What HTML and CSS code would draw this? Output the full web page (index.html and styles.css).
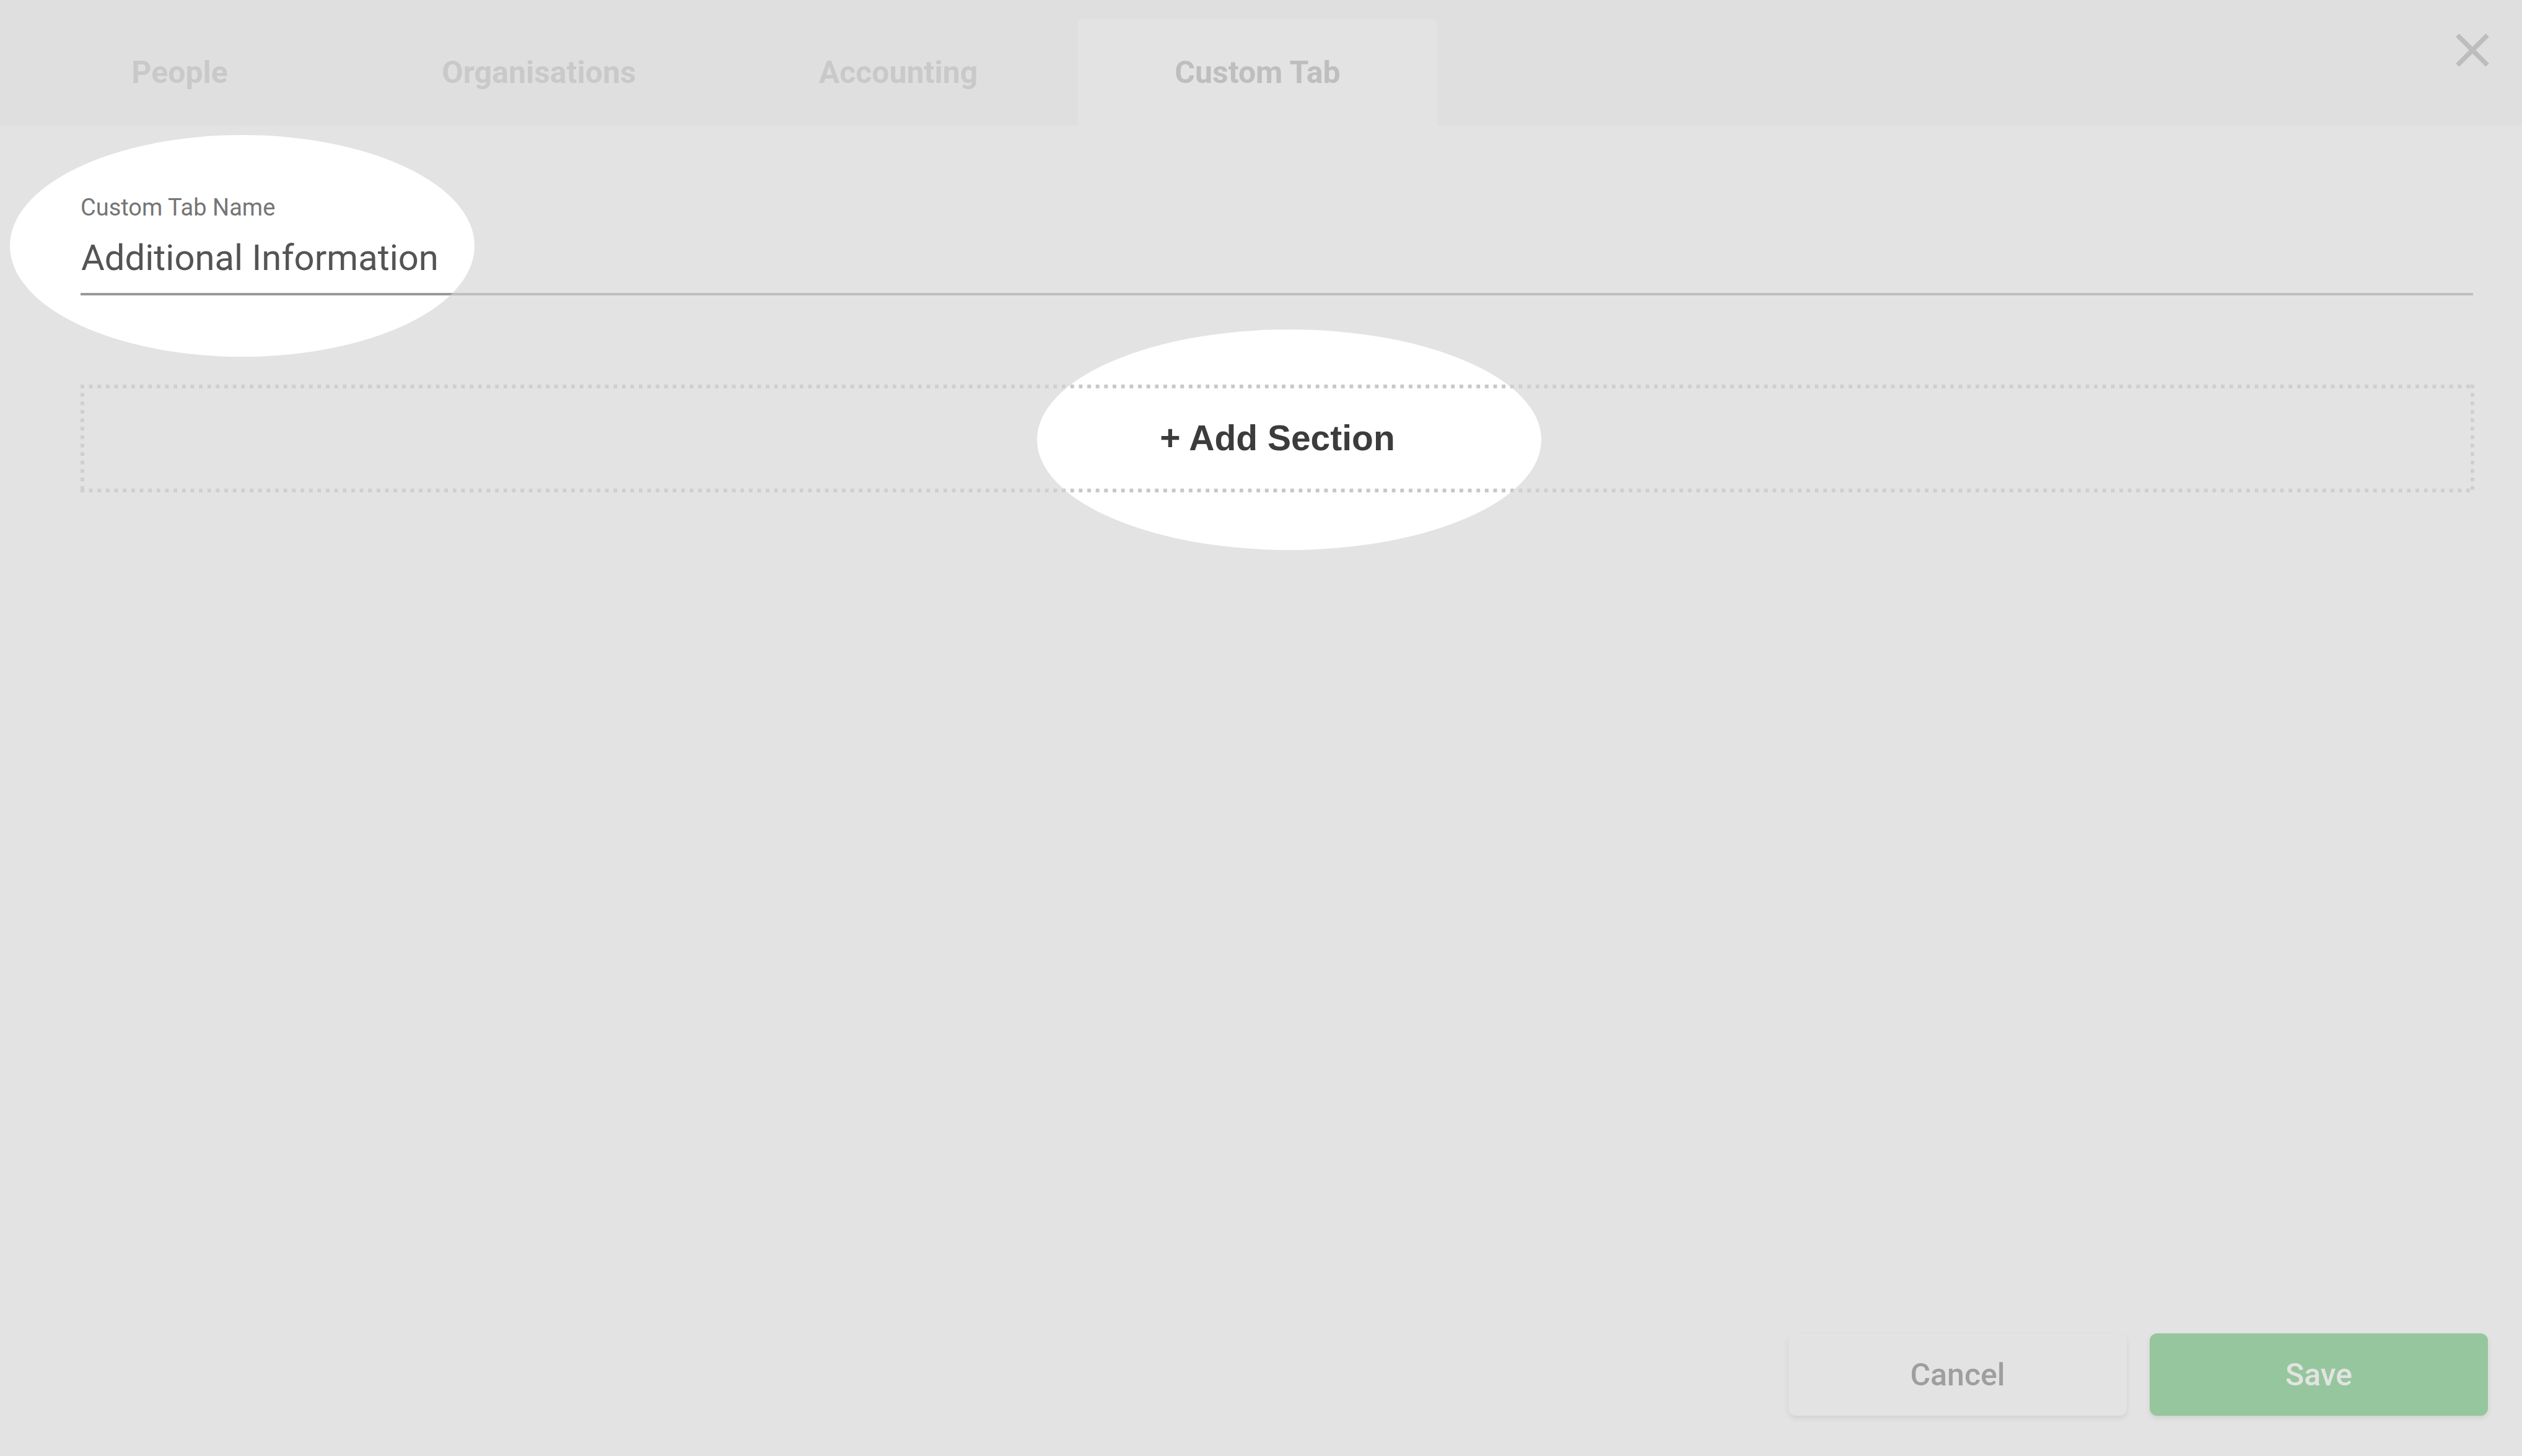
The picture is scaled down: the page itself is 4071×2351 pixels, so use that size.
FILE: index.html
```
<!DOCTYPE html>
<html lang="en">
<head>
    <meta charset="UTF-8">
    <meta name="viewport" content="width=device-width, initial-scale=1.0">
    <title>Custom Tab</title>
    <link rel="stylesheet" href="styles.css">
</head>
<body>
    <div class="dialog">
        <!-- Tab bar -->
        <nav class="tabs">
            <div class="tab">People</div>
            <div class="tab">Organisations</div>
            <div class="tab">Accounting</div>
            <div class="tab active">Custom Tab</div>
        </nav>

        <a href="#" class="close-btn" aria-label="Close">
            <svg viewBox="0 0 24 24" width="92" height="92">
                <path d="M19 6.41L17.59 5 12 10.59 6.41 5 5 6.41 10.59 12 5 17.59 6.41 19 12 13.41 17.59 19 19 17.59 13.41 12z"/>
            </svg>
        </a>

        <!-- Tab content -->
        <main class="content">
            <div class="field">
                <label class="field-label">Custom Tab Name</label>
                <div class="field-input">Additional Information</div>
            </div>

            <div class="add-section">+ Add Section</div>
        </main>

        <footer class="actions">
            <button class="btn btn-cancel">Cancel</button>
            <button class="btn btn-save">Save</button>
        </footer>
    </div>

    <!-- Onboarding spotlight: dims everything except the two highlighted spots -->
    <svg class="spotlight" viewBox="0 0 4071 2351" preserveAspectRatio="none">
        <path fill-rule="evenodd" d="M0 0H4071V2351H0Z
            M16 397a375 179 0 1 0 750 0a375 179 0 1 0 -750 0Z
            M1674 710a407 178 0 1 0 814 0a407 178 0 1 0 -814 0Z"/>
    </svg>
</body>
</html>
```

FILE: styles.css
```
* {
    margin: 0;
    padding: 0;
    box-sizing: border-box;
}

html,
body {
    height: 100%;
}

body {
    font-family: Roboto, "Liberation Sans", Arial, sans-serif;
    background: #fff;
    overflow: hidden;
}

.dialog {
    position: relative;
    height: 100%;
    display: flex;
    flex-direction: column;
}

/* Tabs */
.tabs {
    display: flex;
    align-items: flex-end;
    height: 203px;
    background: #f4f4f4;
}

.tab {
    width: 580px;
    height: 172px;
    display: flex;
    align-items: center;
    justify-content: center;
    font-size: 50px;
    font-weight: 700;
    line-height: 1;
    color: #b9b9b9;
}

.tab.active {
    background: #fff;
    color: #999;
    border-radius: 8px 8px 0 0;
}

.close-btn {
    position: absolute;
    top: 35px;
    right: 34px;
    display: block;
    line-height: 0;
}

.close-btn svg {
    fill: #969696;
}

/* Content */
.content {
    flex: 1;
    padding: 110px 79px 0 130px;
}

.field-label {
    display: block;
    font-size: 38px;
    line-height: 45px;
    color: #757575;
}

.field-input {
    margin-top: 24px;
    padding: 0 1px 23px;
    font-size: 58px;
    line-height: 68px;
    color: #545454;
    border-bottom: 4px solid #999;
}

/* Dotted box with square dots */
.add-section {
    margin-top: 144px;
    height: 174px;
    margin-right: -2px;
    padding-bottom: 2px;
    display: flex;
    align-items: center;
    justify-content: center;
    font-family: "Liberation Sans", Arial, sans-serif;
    font-size: 57px;
    font-weight: bold;
    color: #3c3c3c;
    background:
        linear-gradient(90deg, #c8c8c8 6px, transparent 6px) 0 0 / 13.66px 6px repeat-x,
        linear-gradient(90deg, #c8c8c8 6px, transparent 6px) 0 100% / 13.66px 6px repeat-x,
        linear-gradient(#c8c8c8 6px, transparent 6px) 0 0 / 6px 13.66px repeat-y,
        linear-gradient(#c8c8c8 6px, transparent 6px) 100% 0 / 6px 13.66px repeat-y;
}

/* Footer buttons */
.actions {
    display: flex;
    justify-content: flex-end;
    gap: 37px;
    padding: 0 55px 65px 0;
}

.btn {
    width: 546px;
    height: 133px;
    border: none;
    border-radius: 12px;
    font-family: Roboto, "Liberation Sans", Arial, sans-serif;
    font-size: 50px;
    font-weight: 500;
    box-shadow: 0 4px 8px rgba(0, 0, 0, 0.2);
}

.btn-cancel {
    background: #fff;
    color: #424242;
}

.btn-save {
    background: #2eb141;
    color: #fff;
}

/* Overlay */
.spotlight {
    position: fixed;
    top: 0;
    left: 0;
    width: 100%;
    height: 100%;
    pointer-events: none;
}

.spotlight path {
    fill: rgba(211, 211, 211, 0.635);
}
```
